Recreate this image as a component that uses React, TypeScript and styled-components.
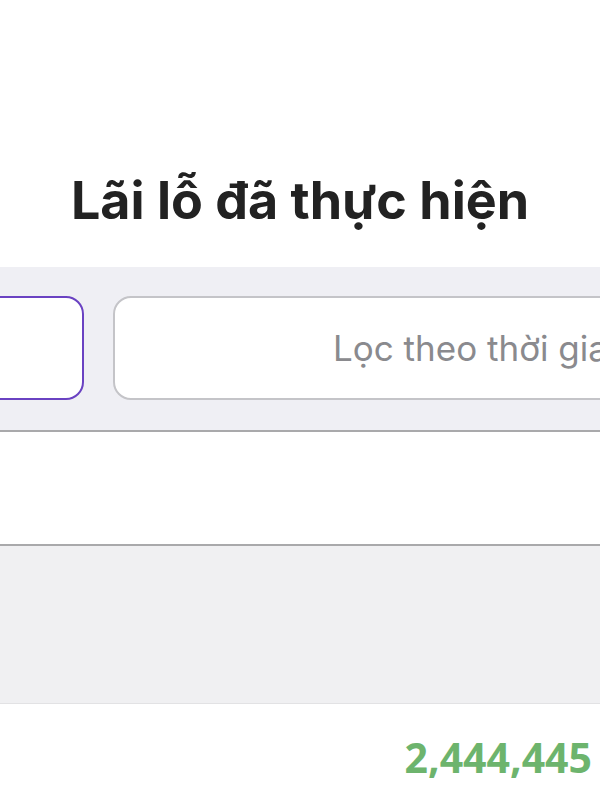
import React from 'react';
import styled, { createGlobalStyle } from 'styled-components';

const GlobalStyle = createGlobalStyle`
  html, body {
    margin: 0;
    padding: 0;
    background: #ffffff;
  }
  body {
    font-family: Inter, Roboto, "Noto Sans", sans-serif;
    overflow: hidden;
  }
`;

const App: React.FC = () => {
  return (
    <Page>
      <GlobalStyle />
      <Header>
        <Title>Lãi lỗ đã thực hiện</Title>
      </Header>

      <FilterBar>
        <FilterTrack>
          <FilterInput $active $width={200} $indent={0} placeholder="" readOnly />
          <FilterInput $width={700} $indent={218} placeholder="Lọc theo thời gian" readOnly />
        </FilterTrack>
      </FilterBar>

      <EmptySection />

      <SummaryPanel />

      <TotalRow>
        <TotalValue>2,444,445</TotalValue>
      </TotalRow>
    </Page>
  );
};

const Page = styled.div`
  width: 600px;
  height: 800px;
  display: flex;
  flex-direction: column;
  overflow: hidden;
`;

const Header = styled.header`
  height: 267px;
  display: flex;
  align-items: flex-end;
  justify-content: center;
  padding-bottom: 40px;
  box-sizing: border-box;
`;

const Title = styled.h1`
  margin: 0;
  font-family: Inter, Roboto, "Noto Sans", sans-serif;
  font-weight: 700;
  font-size: 52px;
  line-height: 1;
  color: #222222;
`;

const FilterBar = styled.section`
  height: 165px;
  box-sizing: border-box;
  background: #efeff4;
  border-bottom: 2px solid #a9a9ab;
  padding: 29px 0 0;
  overflow: hidden;
`;

const FilterTrack = styled.div`
  display: flex;
  gap: 29px;
  margin-left: -116px;
`;

const FilterInput = styled.input<{ $active?: boolean; $width: number; $indent: number }>`
  flex: none;
  width: ${(p) => p.$width}px;
  height: 104px;
  box-sizing: border-box;
  border-radius: 18px;
  border: ${(p) => (p.$active ? '2.5px solid #6a42c2' : '2px solid #c4c4c8')};
  background: #ffffff;
  padding: 0 0 0 ${(p) => p.$indent}px;
  font-family: Inter, Roboto, "Noto Sans", sans-serif;
  font-size: 35px;
  text-align: left;
  color: #333;
  outline: none;
  &::placeholder {
    color: #8a8a8e;
  }
`;

const EmptySection = styled.div`
  height: 112px;
  background: #ffffff;
`;

const SummaryPanel = styled.div`
  height: 160px;
  box-sizing: border-box;
  background: #f0f0f2;
  border-top: 2px solid #a9a9ab;
  border-bottom: 1px solid #e2e2e4;
`;

const TotalRow = styled.div`
  display: flex;
  justify-content: flex-end;
  padding: 33px 8px 0;
`;

const TotalValue = styled.span`
  font-family: "Open Sans", "Noto Sans", sans-serif;
  font-weight: 700;
  font-size: 41px;
  line-height: 1;
  color: #6db46d;
`;

export default App;
